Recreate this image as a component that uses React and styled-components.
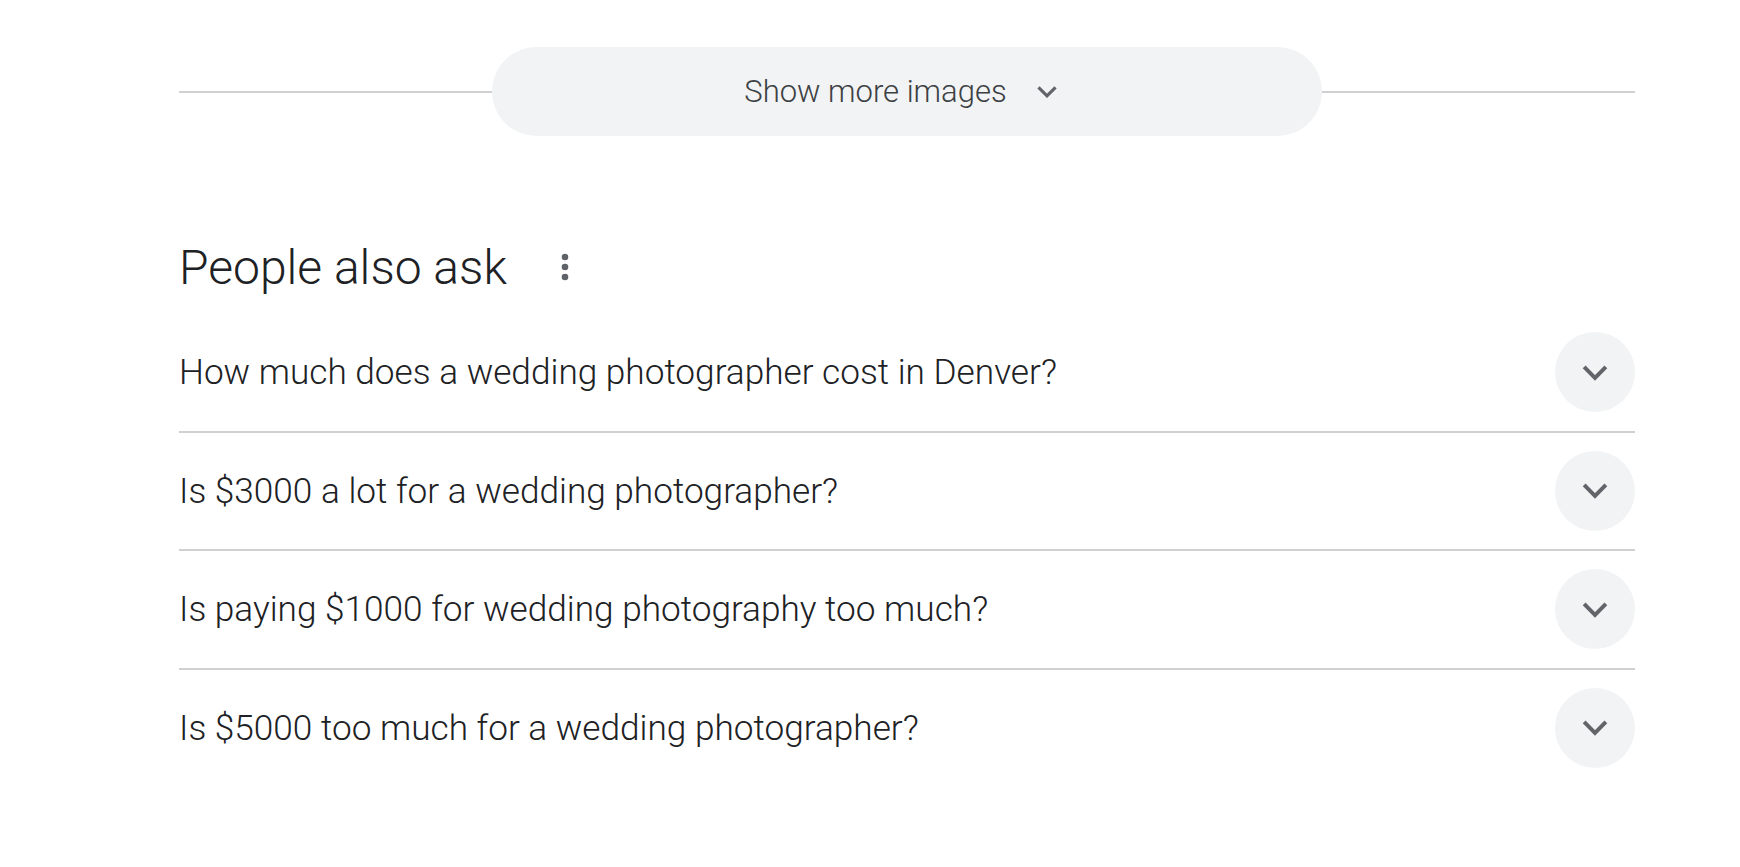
import styled, { createGlobalStyle } from "styled-components";

const GlobalStyle = createGlobalStyle`
  body {
    margin: 0;
    background: #fff;
    font-family: "Roboto Light", Roboto, "Liberation Sans", Arial, sans-serif;
    font-weight: 300;
  }
`

const Page = styled.div`
  width: 1456px;
  padding: 47px 0 0 179px;
`

const ImagesBar = styled.div`
  display: flex;
  align-items: center;
`

const Rule = styled.div`
  flex: 1;
  height: 2px;
  background: #d0d0d2;
`

const MoreButton = styled.button`
  width: 830px;
  height: 89px;
  padding: 0 12px 0 0;
  border: none;
  border-radius: 45px;
  background: #f1f3f4;
  display: flex;
  align-items: center;
  justify-content: center;
  gap: 29px;
  font-family: inherit;
  font-weight: 300;
  font-size: 31px;
  color: #3c4043;
  cursor: pointer;
`

const Heading = styled.div`
  margin-top: 103px;
  height: 56px;
  display: flex;
  align-items: center;
  gap: 54px;
`

const Title = styled.h2`
  margin: 0;
  font-weight: 300;
  font-size: 48px;
  color: #202124;
`

const Questions = styled.div`
  margin-top: 19px;
  display: flex;
  flex-direction: column;
`

const Row = styled.div`
  height: 116.5px;
  display: flex;
  align-items: center;
  justify-content: space-between;
  border-bottom: ${p => (p.last ? "none" : "2px solid #d0d0d2")};
`

const Question = styled.span`
  font-weight: 300;
  font-size: 35.2px;
  color: #202124;
`

const Toggle = styled.div`
  width: 80px;
  height: 80px;
  border-radius: 50%;
  background: #f1f3f4;
  display: flex;
  align-items: center;
  justify-content: center;
`

const Chevron = ({ size = 28 }) => (
  <svg width={size} height={size * 0.6} viewBox="0 0 28 17" fill="none">
    <path d="M3 3l11 11L25 3" stroke="#616469" strokeWidth="4" />
  </svg>
)

const Kebab = () => (
  <svg width="8" height="30" viewBox="0 0 8 30">
    <circle cx="4" cy="5" r="3.3" fill="#5f6368" />
    <circle cx="4" cy="15" r="3.3" fill="#5f6368" />
    <circle cx="4" cy="25" r="3.3" fill="#5f6368" />
  </svg>
)

const questions = [
  "How much does a wedding photographer cost in Denver?",
  "Is $3000 a lot for a wedding photographer?",
  "Is paying $1000 for wedding photography too much?",
  "Is $5000 too much for a wedding photographer?",
]

function App() {
  return (
    <Page>
      <GlobalStyle />
      <ImagesBar>
        <Rule />
        <MoreButton>
          Show more images
          <Chevron size={22} />
        </MoreButton>
        <Rule />
      </ImagesBar>
      <Heading>
        <Title>People also ask</Title>
        <Kebab />
      </Heading>
      <Questions>
        {questions.map((q, i) => (
          <Row key={q} last={i === questions.length - 1}>
            <Question>{q}</Question>
            <Toggle>
              <Chevron />
            </Toggle>
          </Row>
        ))}
      </Questions>
    </Page>
  )
}

export default App;
